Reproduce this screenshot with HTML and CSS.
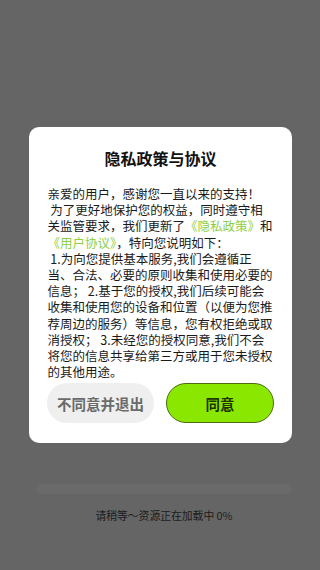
FILE: index.html
```html
<!DOCTYPE html>
<html lang="zh">
<head>
<meta charset="utf-8">
<link rel="stylesheet" href="styles.css">
</head>
<body>
<div class="screen">
  <div class="dialog">
    <h1 class="title">隐私政策与协议</h1>
    <div class="content">
      <p>亲爱的用户，感谢您一直以来的支持！<br>&nbsp;为了更好地保护您的权益，同时遵守相<br>关监管要求，我们更新了<span class="link">《隐私政策》</span>和<br><span class="link">《用户协议》</span>，特向您说明如下：<br>&nbsp;1.为向您提供基本服务,我们会遵循正<br>当、合法、必要的原则收集和使用必要的<br>信息； 2.基于您的授权,我们后续可能会<br>收集和使用您的设备和位置（以便为您推<br>荐周边的服务）等信息，您有权拒绝或取<br>消授权； 3.未经您的授权同意,我们不会<br>将您的信息共享给第三方或用于您未授权<br>的其他用途。</p>
    </div>
    <div class="actions">
      <button class="btn btn-decline">不同意并退出</button>
      <button class="btn btn-agree">同意</button>
    </div>
  </div>
  <div class="progress"></div>
  <div class="loading">请稍等～资源正在加载中 0%</div>
</div>
</body>
</html>
```
FILE: styles.css
```css
html, body {
  margin: 0;
  padding: 0;
}
body {
  width: 320px;
  height: 570px;
  background: #656565;
  font-family: "Noto Sans CJK SC", "Noto Sans", sans-serif;
  overflow: hidden;
}
.screen {
  display: flex;
  flex-direction: column;
  align-items: center;
  padding-top: 127px;
}
.dialog {
  width: 263px;
  height: 316px;
  box-sizing: border-box;
  background: #ffffff;
  border-radius: 10px;
  margin-left: 1px;
  display: flex;
  flex-direction: column;
  align-items: center;
}
.title {
  margin: 19px 0 0;
  font-size: 16px;
  line-height: 24px;
  font-weight: 600;
  color: #111;
}
.content {
  width: 228px;
  margin-top: 16px;
  margin-left: 2px;
}
.content p {
  margin: 0;
  font-size: 12.5px;
  line-height: 16.2px;
  color: #1a1a1a;
  text-align: left;
  white-space: nowrap;
  font-feature-settings: "chws" 0, "halt" 0, "palt" 0;
}
.link {
  color: #8dcf45;
}
.actions {
  display: flex;
  gap: 12px;
  margin-top: 3px;
  width: 227px;
}
.btn {
  height: 40px;
  border-radius: 20px;
  font-family: "Noto Sans CJK SC", "Noto Sans", sans-serif;
  font-size: 14.5px;
  font-weight: 600;
  padding: 0;
  box-sizing: border-box;
}
.btn-decline {
  width: 107px;
  background: #efefef;
  border: none;
  color: #6a6a6a;
}
.btn-agree {
  width: 108px;
  background: #8ae800;
  border: 1px solid #4d6b12;
  color: #1e3300;
}
.progress {
  width: 256px;
  height: 10px;
  margin-top: 41px;
  margin-left: 7px;
  border-radius: 5px;
  background: #6a6a6a;
}
.loading {
  margin-top: 13px;
  margin-left: 8px;
  font-size: 10.8px;
  line-height: 16px;
  color: #1c1c1c;
}
```
